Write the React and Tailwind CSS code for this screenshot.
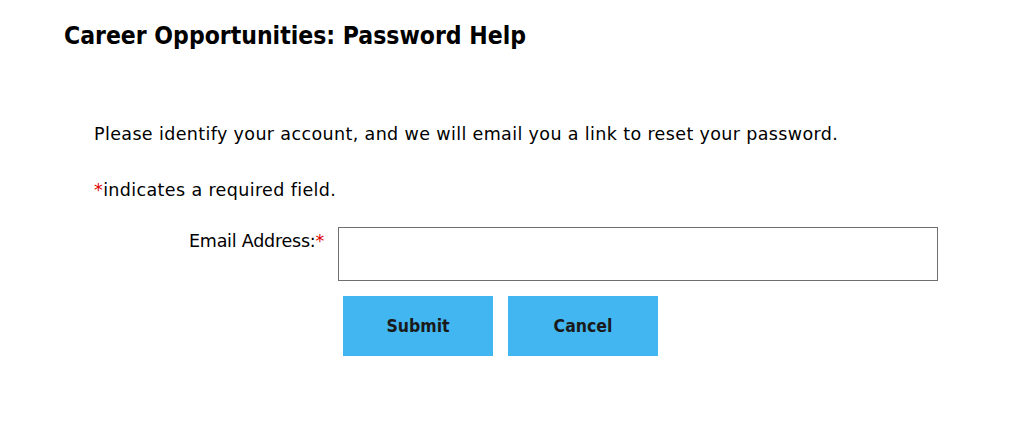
export default function App() {
    return (
        <div className="min-h-[440px] bg-white text-black" style={{ fontFamily: '"DejaVu Sans", sans-serif' }}>
            <div className="pl-[64px] pt-[18px]">
                <h1 className="text-[24.5px] font-bold leading-[36px]" style={{ fontFamily: '"DejaVu Sans Condensed", "DejaVu Sans", sans-serif' }}>
                    Career Opportunities: Password Help
                </h1>
            </div>

            <div className="pl-[94px] pt-[65px]">
                <p className="text-[17.5px] leading-[30px] tracking-[0.37px]">
                    Please identify your account, and we will email you a link to reset your password.
                </p>
                <p className="text-[17.5px] leading-[30px] tracking-[0.37px] mt-[26px]">
                    <span className="text-[#e00000]">*</span>indicates a required field.
                </p>
            </div>

            {/* Form */}
            <div className="mt-[22px] flex items-start">
                <label className="w-[338px] pr-[14px] text-right text-[17.5px] tracking-[-0.23px] leading-[30px] -mt-[1px]">
                    Email Address:<span className="text-[#e00000]">*</span>
                </label>
                <input type="text" className="w-[600px] h-[54px] border border-[#6f6f6f] bg-white outline-none px-2" />
            </div>
            <div
                className="pl-[343px] pt-[15px] flex gap-[15px]"
                style={{ fontFamily: '"DejaVu Sans Condensed", "DejaVu Sans", sans-serif' }}
            >
                <button className="w-[150px] h-[60px] bg-[#42b6f0] text-[17.5px] font-bold text-[#1a1a1a]">Submit</button>
                <button className="w-[150px] h-[60px] bg-[#42b6f0] text-[17.5px] font-bold text-[#1a1a1a]">Cancel</button>
            </div>
        </div>
    );
}
